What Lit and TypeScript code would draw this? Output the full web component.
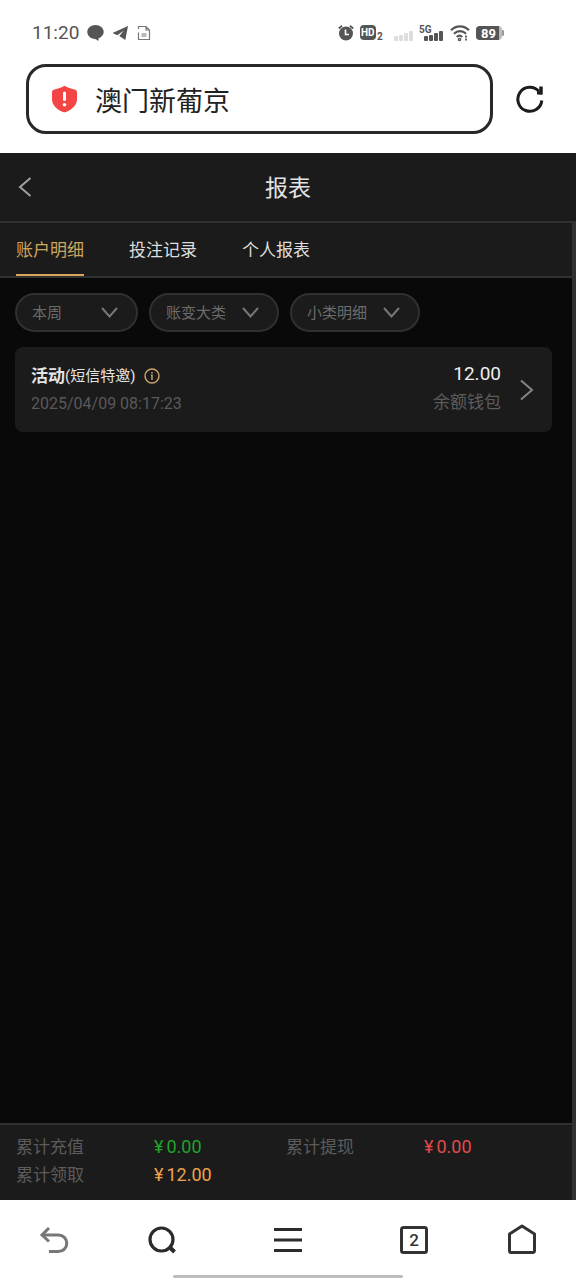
import { LitElement, html, css, svg } from "lit";
import { customElement, property, state } from "lit/decorators.js";
import { classMap } from "lit/directives/class-map.js";

const signalBars = (color: string) => svg`
  <g fill=${color}>
    <rect x="0" y="7" width="4" height="5" rx="1"/>
    <rect x="5" y="6" width="4" height="6" rx="1"/>
    <rect x="10" y="4" width="4" height="8" rx="1"/>
    <rect x="15" y="2" width="4" height="10" rx="1"/>
  </g>`;

@customElement("status-bar")
class StatusBar extends LitElement {
  static styles = css`
    :host {
      display: flex;
      justify-content: space-between;
      align-items: center;
      height: 64px;
      padding: 2px 72px 0 32px;
      box-sizing: border-box;
      color: #555;
    }
    .group { display: flex; align-items: center; gap: 8px; }
    .indicators { gap: 6px; }
    .time { font-size: 19px; line-height: 24px; }
    .hd { font: bold 10px Roboto, sans-serif; }
    .sub { font: bold 10px Roboto, sans-serif; }
    .level { font: bold 13px Roboto, sans-serif; }
    .dim { margin: 0 0 0 4px; }
    svg { display: block; }
  `;
  render() {
    return html`
      <div class="group">
        <span class="time">11:20</span>
        <svg width="17" height="18" viewBox="0 0 17 18"><path fill="#555" d="M8.500 1C4 1 .3 4 .3 8c0 3.600 3.300 6.800 7.700 7 1 0 1.700.8 2.500 1.600.5.400 1 .2 1-.5v-1.700c3-1.200 5.200-3.600 5.200-6.400 0-4-3.700-7-8.200-7z"/></svg>
        <svg width="17" height="16" viewBox="0 0 17 16"><path fill="#555" d="M16 1 .5 8l4.800 2.200L12 5.500 7.300 11l6 4z"/></svg>
        <svg width="14" height="16" viewBox="0 0 14 16" fill="none" stroke="#777" stroke-width="1.200"><path d="M1.500 4V1.500h7.500L12.500 5v9.500h-11V7.500M9 1.500V5h3.500M4.500 9h5M4.500 11h5"/></svg>
      </div>
      <div class="group indicators">
        <svg width="16" height="18" viewBox="0 0 16 18"><circle cx="8" cy="9.500" r="7" fill="#555"/><path d="M.8 4.500 4 1.800M15.200 4.500 12 1.800" stroke="#555" stroke-width="1.800"/><path d="M7.500 5.500V10.500h3.500" fill="none" stroke="#fff" stroke-width="1.600"/></svg>
        <svg width="24" height="20" viewBox="0 0 24 20"><rect y="2" width="16" height="15" rx="4" fill="#555"/><text class="hd" x="1" y="13" fill="#fff">HD</text><text class="sub" x="17" y="17" fill="#555">2</text></svg>
        <svg class="dim" width="19" height="18" viewBox="0 -5 19 18">${signalBars("#ddd")}</svg>
        <svg width="25" height="20" viewBox="0 0 25 20"><text class="hd" x="0" y="10" fill="#555">5G</text><g transform="translate(5 6)">${signalBars("#555")}</g></svg>
        <svg width="20" height="18" viewBox="0 0 20 18" fill="none" stroke="#555" stroke-width="2.200"><path d="M1 6.200C6 1 14 1 19 6.200M4 9.800c3.500-3.600 8.500-3.600 12 0"/><path d="M6.800 13c1.800-1.800 3.600-1.800 5.400 0"/><circle cx="9.500" cy="15.500" r=".7"/><path stroke-width="1.800" d="M16 11.500v2M16 14.500v2"/></svg>
        <svg width="28" height="18" viewBox="0 0 28 18"><rect y="2" width="26" height="14" rx="4" fill="#bbb"/><path d="M4 2h19v14H4a4 4 0 0 1-4-4V6a4 4 0 0 1 4-4z" fill="#555"/><rect x="26" y="6" width="2" height="6" rx="1" fill="#999"/><text class="level" x="5" y="14" fill="#fff">89</text></svg>
      </div>`;
  }
}

@customElement("address-bar")
class AddressBar extends LitElement {
  static styles = css`
    :host { display: flex; align-items: center; padding: 0 26px 19px; }
    .box {
      display: flex;
      flex: 1;
      min-width: 0;
      height: 70px;
      box-sizing: border-box;
      align-items: center;
      gap: 17px;
      padding: 0 24px 0 22px;
      border: 3px solid #282828;
      border-radius: 20px;
      margin-right: 18px;
    }
    .site {
      flex: 1;
      min-width: 0;
      border: 0;
      padding: 5px 0 0;
      outline: 0;
      background: none;
      color: #222;
      font: 27px/40px Roboto, "Noto Sans CJK SC", sans-serif;
    }
    .reload { border: 0; background: none; padding: 4px; display: flex; }
  `;
  render() {
    return html`
      <div class="box">
        <svg width="27" height="28" viewBox="0 0 27 28"><path fill="#f44545" d="M13.500.8c3 2 6.500 3 10 3.600 1.500.3 2.500 1.300 2.500 2.800V14c0 6-4.500 10.500-11 13a4 4 0 0 1-3 0C5.500 24.500 1 20 1 14V7.200c0-1.500 1-2.500 2.500-2.800 3.500-.6 7-1.600 10-3.600z"/><path d="M13.500 8v6.500" stroke="#fff" stroke-width="3" stroke-linecap="round"/><circle cx="13.500" cy="19.800" r="1.800" fill="#fff"/></svg>
        <input class="site" aria-label="网址" .value=${"澳门新葡京"}>
      </div>
      <button class="reload" aria-label="刷新">
        <svg width="31" height="30" viewBox="0 0 31 30" fill="none" stroke="#1c1c1c" stroke-width="3"><path d="M26.800 16.500A12 12 0 1 1 24 7.500"/><path stroke-width="3.500" d="M26 2.500V10.500"/><path d="M27 9h-5"/></svg>
      </button>`;
  }
}

@customElement("filter-select")
class FilterSelect extends LitElement {
  @property() label = "";
  static styles = css`
    :host { display: block; }
    .pill {
      display: grid;
      align-items: center;
      height: 39px;
      box-sizing: border-box;
      border: 2px solid #303030;
      border-radius: 20px;
      background: #1b1b1b;
    }
    .choice, .arrow { grid-area: 1 / 1; }
    .choice {
      appearance: none;
      width: 100%;
      height: 100%;
      border: 0;
      padding: 0 36px 0 15px;
      background: none;
      color: #6b6b6b;
      font: 15px Roboto, "Noto Sans CJK SC", sans-serif;
    }
    .arrow { justify-self: end; margin-right: 18px; pointer-events: none; }
  `;
  render() {
    return html`<div class="pill">
      <select class="choice" aria-label=${this.label}><option>${this.label}</option></select>
      <svg class="arrow" width="17" height="11" viewBox="0 0 17 11" fill="none" stroke="#777" stroke-width="2"><path d="M1 1l7.500 8.500L16 1"/></svg>
    </div>`;
  }
}

@customElement("record-card")
class RecordCard extends LitElement {
  static styles = css`
    :host {
      display: flex;
      align-items: center;
      padding: 12px 17px 12px 16px;
      min-height: 85px;
      box-sizing: border-box;
      border-radius: 8px;
      background: #1b1b1b;
    }
    .info { flex: 1; min-width: 0; }
    .title { display: flex; align-items: center; line-height: 27px; font-size: 15px; color: #e4e4e4; }
    .kind { font-size: 17px; font-weight: bold; }
    .tip { border: 0; background: none; padding: 0; margin-left: 9px; display: flex; }
    .date { line-height: 27px; font-size: 16px; color: #595959; }
    .money { text-align: right; line-height: 28px; margin-right: 18px; padding-bottom: 4px; }
    .amount { font-size: 19px; color: #eee; }
    .wallet { font-size: 17px; color: #5c5c5c; }
    .more { display: flex; }
  `;
  render() {
    return html`
      <div class="info">
        <div class="title">
          <span class="kind">活动</span><span>(短信特邀)</span>
          <button class="tip" aria-label="说明">
            <svg width="16" height="16" viewBox="0 0 16 16" fill="none" stroke="#cda66d" stroke-width="1.400"><circle cx="8" cy="8" r="7"/><path d="M7 7.300h1V12M8 4v1.600"/></svg>
          </button>
        </div>
        <div class="date">2025/04/09 08:17:23</div>
      </div>
      <div class="money">
        <div class="amount">12.00</div>
        <div class="wallet">余额钱包</div>
      </div>
      <a class="more" href="#detail" aria-label="详情">
        <svg width="16" height="22" viewBox="0 0 16 22" fill="none" stroke="#858585" stroke-width="2"><path d="M2 1.500 13 11 2 20.500"/></svg>
      </a>`;
  }
}

@customElement("browser-nav")
class BrowserNav extends LitElement {
  static styles = css`
    :host { display: block; height: 80px; background: #fff; }
    .row { display: grid; grid-template-columns: 3fr 3fr 4fr 3fr 3fr; height: 75px; padding-top: 2px; box-sizing: border-box; }
    .key { border: 0; background: none; padding: 3px 0 0; display: flex; align-items: center; justify-content: center; }
    .count { font: 500 17px Roboto, sans-serif; }
    .grip { width: 40%; height: 3px; margin: 0 auto; border-radius: 2px; background: #bdbdbd; }
  `;
  render() {
    return html`
      <div class="row">
        <button class="key" aria-label="后退"><svg width="30" height="28" viewBox="0 0 30 28" fill="none" stroke="#777" stroke-width="3"><path d="M2.500 9h17a8.300 8.300 0 0 1 0 16.600H10"/><path d="M10 2 3 9l7 6.500"/></svg></button>
        <button class="key" aria-label="搜索"><svg width="28" height="28" viewBox="0 0 28 28" fill="none" stroke="#2b2b2b" stroke-width="3.200"><circle cx="13.500" cy="13.500" r="11.500"/><path stroke-width="4" d="m21 20.500 5.500 5.500"/></svg></button>
        <button class="key" aria-label="菜单"><svg width="28" height="28" viewBox="0 0 28 28" stroke="#2b2b2b" stroke-width="3"><path d="M0 3.500h28M0 14h28M0 24.500h28"/></svg></button>
        <button class="key" aria-label="标签页"><svg width="28" height="28" viewBox="0 0 28 28"><rect x="1.500" y="1.500" width="25" height="25" rx="2" fill="none" stroke="#333" stroke-width="3"/><text class="count" x="14" y="20" text-anchor="middle" fill="#333">2</text></svg></button>
        <button class="key" aria-label="主页"><svg width="28" height="32" viewBox="0 0 28 32" fill="none" stroke="#333" stroke-width="3" stroke-linejoin="round"><path d="M14 2 26.500 10v17a1.500 1.500 0 0 1-1.500 1.500H3A1.500 1.500 0 0 1 1.500 27V10z"/></svg></button>
      </div>
      <div class="grip"></div>`;
  }
}

@customElement("app-root")
class AppRoot extends LitElement {
  @state() private active = 0;
  private tabs = ["账户明细", "投注记录", "个人报表"];
  private totals = [
    { name: "累计充值", value: "0.00", tone: "green" },
    { name: "累计提现", value: "0.00", tone: "red" },
    { name: "累计领取", value: "12.00", tone: "orange" },
  ];
  static styles = css`
    :host {
      display: flex;
      flex-direction: column;
      min-height: 100vh;
      background: #fff;
      font-family: Roboto, "Noto Sans CJK SC", sans-serif;
    }
    .header {
      display: grid;
      grid-template-columns: 1fr auto 1fr;
      align-items: center;
      height: 70px;
      box-sizing: border-box;
      padding: 0 18px;
      background: #1b1b1b;
      border-bottom: 2px solid #303030;
    }
    .back { justify-self: start; border: 0; padding: 0; background: none; display: flex; }
    .heading { margin: 0; padding-top: 4px; font-size: 23px; font-weight: 400; line-height: 32px; color: #e2e2e2; }
    .view { flex: 1; display: flex; background: #090909; }
    .track { width: 4px; background: #303030; }
    .page { flex: 1; min-width: 0; display: flex; flex-direction: column; }
    .tabs { display: flex; gap: 45px; height: 55px; box-sizing: border-box; padding: 0 16px; background: #1b1b1b; border-bottom: 2px solid #303030; }
    .tab {
      border: 0;
      border-bottom: 2px solid transparent;
      padding: 0;
      background: none;
      color: #dedede;
      font: 17px Roboto, "Noto Sans CJK SC", sans-serif;
    }
    .tab.on { color: #cda65f; border-color: #d9a65c; }
    .content { flex: 1; padding: 15px 20px 15px 15px; }
    .filters { display: grid; grid-template-columns: 123px 130px 130px; gap: 11px; margin-bottom: 15px; }
    .totals {
      display: grid;
      grid-template-columns: 1fr 1fr;
      margin: 0;
      padding: 8px 16px 11px;
      background: #1b1b1b;
      border-top: 2px solid #303030;
      line-height: 28px;
    }
    .total { display: grid; grid-template-columns: 138fr 132fr; }
    .name { color: #5c5c5c; font-size: 17px; }
    .value { margin: 0; font-size: 18px; display: flex; gap: 3px; }
    .green { color: #1fa32a; }
    .red { color: #e04b4b; }
    .orange { color: #eda24b; }
  `;
  render() {
    return html`
      <status-bar></status-bar>
      <address-bar></address-bar>
      <header class="header">
        <button class="back" aria-label="返回">
          <svg width="14" height="20" viewBox="0 0 14 20" fill="none" stroke="#a0a0a0" stroke-width="2"><path d="M12.500 1 2 10l10.500 9"/></svg>
        </button>
        <h1 class="heading">报表</h1>
      </header>
      <div class="view">
        <main class="page">
          <nav class="tabs">
            ${this.tabs.map((name, i) => html`<button class=${classMap({ tab: true, on: i === this.active })} @click=${() => (this.active = i)}>${name}</button>`)}
          </nav>
          <div class="content">
            <div class="filters">
              <filter-select label="本周"></filter-select>
              <filter-select label="账变大类"></filter-select>
              <filter-select label="小类明细"></filter-select>
            </div>
            <record-card></record-card>
          </div>
          <dl class="totals">
            ${this.totals.map((t) => html`<div class="total"><dt class="name">${t.name}</dt><dd class="value ${t.tone}"><span>¥</span><span>${t.value}</span></dd></div>`)}
          </dl>
        </main>
        <div class="track"></div>
      </div>
      <browser-nav></browser-nav>`;
  }
}
